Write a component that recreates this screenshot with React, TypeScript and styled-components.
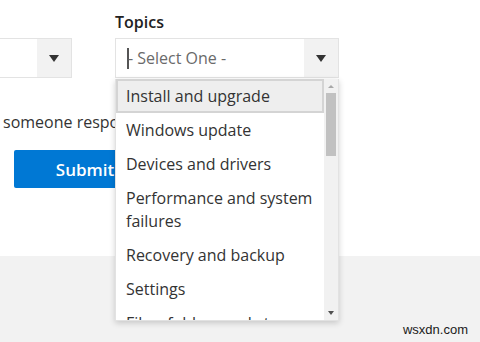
import React from 'react';
import styled, { createGlobalStyle } from 'styled-components';

const GlobalStyle = createGlobalStyle`
  html, body {
    margin: 0;
    padding: 0;
    background: #ffffff;
  }
  body {
    font-family: "Open Sans", "Noto Sans", sans-serif;
    color: #333333;
    overflow: hidden;
  }
`;

const Page = styled.div`
  width: 480px;
  height: 342px;
  display: flex;
  flex-direction: column;
  overflow: hidden;
`;

const Content = styled.div`
  height: 256px;
  background: #ffffff;
  display: flex;
  flex-direction: column;
`;

const FieldRow = styled.div`
  display: flex;
  align-items: flex-end;
  gap: 43px;
  padding-top: 11px;
`;

const Field = styled.div<{ $width: number }>`
  position: relative;
  width: ${({ $width }) => $width}px;
  display: flex;
  flex-direction: column;
`;

const Label = styled.div`
  font-size: 16px;
  font-weight: 600;
  color: #222222;
  line-height: 22px;
  margin-bottom: 5px;
`;

const SelectBox = styled.div<{ $cutLeft?: boolean }>`
  height: 40px;
  box-sizing: border-box;
  border: 1px solid #e3e3e3;
  border-left: ${({ $cutLeft }) => ($cutLeft ? 'none' : '1px solid #e3e3e3')};
  background: #ffffff;
  display: flex;
  align-items: stretch;
`;

const SelectValue = styled.div`
  flex: 1;
  display: flex;
  align-items: center;
  padding-left: 11px;
  font-size: 16px;
  color: #6a6a6a;
`;

const Caret = styled.span`
  display: inline-block;
  width: 2px;
  height: 21px;
  background: #555555;
  margin-right: -1px;
`;

const ArrowCell = styled.div`
  width: 34px;
  background: #f2f2f2;
  display: flex;
  align-items: center;
  justify-content: center;
`;

const Triangle = styled.span<{ $size: number; $color: string }>`
  width: 0;
  height: 0;
  border-left: ${({ $size }) => $size}px solid transparent;
  border-right: ${({ $size }) => $size}px solid transparent;
  border-top: ${({ $size }) => Math.round($size * 1.4)}px solid ${({ $color }) => $color};
`;

const UpTriangle = styled.span<{ $size: number; $color: string }>`
  width: 0;
  height: 0;
  border-left: ${({ $size }) => $size}px solid transparent;
  border-right: ${({ $size }) => $size}px solid transparent;
  border-bottom: ${({ $size }) => $size}px solid ${({ $color }) => $color};
`;

const HelpText = styled.div`
  font-size: 16px;
  line-height: 22px;
  color: #333333;
  padding-left: 3px;
  margin-top: 33px;
  white-space: nowrap;
`;

const SubmitButton = styled.button`
  margin: 17px 0 0 14px;
  width: 138px;
  height: 38px;
  border: none;
  border-radius: 2px;
  background: #0078d4;
  color: #ffffff;
  font-family: "Open Sans", "Noto Sans", sans-serif;
  font-size: 17px;
  font-weight: 600;
  padding-left: 10px;
  cursor: pointer;
`;

const Dropdown = styled.div`
  position: absolute;
  top: 100%;
  left: 0;
  width: 224px;
  height: 242px;
  margin-top: 1px;
  box-sizing: border-box;
  background: #ffffff;
  border: 1px solid #e2e2e2;
  border-top: none;
  box-shadow: 0 2px 6px rgba(0, 0, 0, 0.18);
  display: flex;
  z-index: 2;
`;

const OptionList = styled.ul`
  list-style: none;
  margin: 0;
  padding: 0;
  flex: 1;
  overflow: hidden;
`;

const Option = styled.li<{ $active?: boolean }>`
  font-size: 16px;
  line-height: 23px;
  color: #333333;
  box-sizing: border-box;
  width: 208px;
  background: ${({ $active }) => ($active ? '#eeeeee' : 'transparent')};
  border: ${({ $active }) => ($active ? '2px solid #d4d4d4' : 'none')};
  padding: ${({ $active }) => ($active ? '4px 10px 3px 8px' : '6px 10px 5px 10px')};
`;

const ScrollTrack = styled.div`
  width: 14px;
  background: #f1f1f1;
  display: flex;
  flex-direction: column;
  align-items: center;
`;

const ScrollButton = styled.div`
  height: 14px;
  width: 14px;
  display: flex;
  align-items: center;
  justify-content: center;
`;

const ScrollThumb = styled.div`
  width: 10px;
  height: 63px;
  background: #c1c1c1;
`;

const ScrollSpacer = styled.div`
  flex: 1;
`;

const Footer = styled.div`
  flex: 1;
  background: #f2f2f2;
  display: flex;
  align-items: flex-end;
  justify-content: flex-end;
  padding: 0 12px 2px 0;
`;

const Watermark = styled.span`
  font-family: "Liberation Sans", Arial, sans-serif;
  font-size: 13px;
  color: #1a1a1a;
  line-height: 20px;
`;

const topics = [
  'Install and upgrade',
  'Windows update',
  'Devices and drivers',
  'Performance and system failures',
  'Recovery and backup',
  'Settings',
  'Files, folders and storage',
];

export default function App() {
  return (
    <Page>
      <GlobalStyle />
      <Content>
        <FieldRow>
          <Field $width={72}>
            <SelectBox $cutLeft>
              <SelectValue />
              <ArrowCell>
                <Triangle $size={5} $color="#333333" />
              </ArrowCell>
            </SelectBox>
          </Field>
          <Field $width={224}>
            <Label>Topics</Label>
            <SelectBox>
              <SelectValue>
                <Caret />- Select One -
              </SelectValue>
              <ArrowCell>
                <Triangle $size={5} $color="#333333" />
              </ArrowCell>
            </SelectBox>
            <Dropdown>
              <OptionList>
                {topics.map((t, i) => (
                  <Option key={t} $active={i === 0}>
                    {t}
                  </Option>
                ))}
              </OptionList>
              <ScrollTrack>
                <ScrollButton>
                  <UpTriangle $size={3} $color="#a8a8a8" />
                </ScrollButton>
                <ScrollThumb />
                <ScrollSpacer />
                <ScrollButton>
                  <Triangle $size={3} $color="#505050" />
                </ScrollButton>
              </ScrollTrack>
            </Dropdown>
          </Field>
        </FieldRow>
        <HelpText>someone respond to me</HelpText>
        <SubmitButton>Submit</SubmitButton>
      </Content>
      <Footer>
        <Watermark>wsxdn.com</Watermark>
      </Footer>
    </Page>
  );
}
